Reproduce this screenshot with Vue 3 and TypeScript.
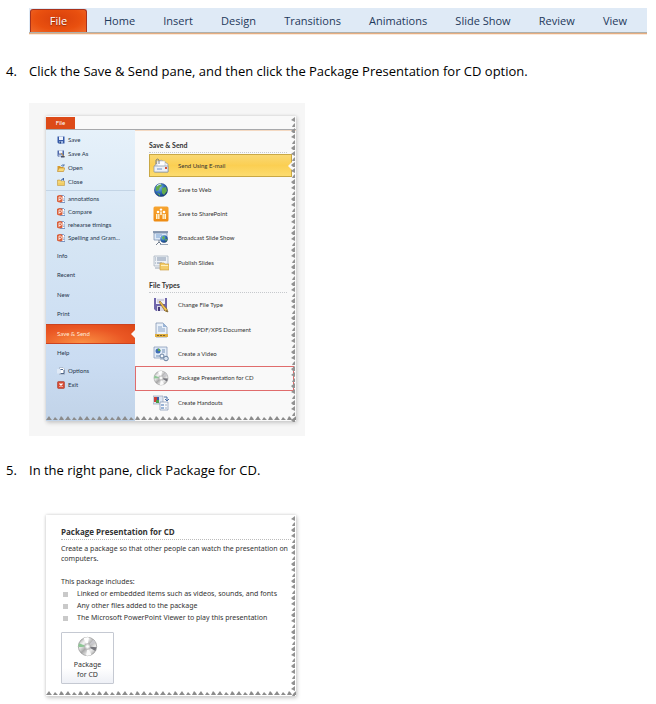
<script setup lang="ts">
interface Entry {
  label: string
  icon?: string
}

const tabs: string[] = ['Home', 'Insert', 'Design', 'Transitions', 'Animations', 'Slide Show', 'Review', 'View']

const fileCommands: Entry[] = [
  { label: 'Save', icon: 'save' },
  { label: 'Save As', icon: 'save-as' },
  { label: 'Open', icon: 'open' },
  { label: 'Close', icon: 'close' },
]

const recentFiles: string[] = ['annotations', 'Compare', 'rehearse timings', 'Spelling and Gram...']

const pages: string[] = ['Info', 'Recent', 'New', 'Print', 'Save & Send', 'Help']

const exitCommands: Entry[] = [
  { label: 'Options', icon: 'options' },
  { label: 'Exit', icon: 'exit' },
]

const sendOptions: Entry[] = [
  { label: 'Send Using E-mail', icon: 'mail' },
  { label: 'Save to Web', icon: 'globe' },
  { label: 'Save to SharePoint', icon: 'sharepoint' },
  { label: 'Broadcast Slide Show', icon: 'broadcast' },
  { label: 'Publish Slides', icon: 'publish' },
]

const fileTypes: Entry[] = [
  { label: 'Change File Type', icon: 'change' },
  { label: 'Create PDF/XPS Document', icon: 'pdf' },
  { label: 'Create a Video', icon: 'video' },
  { label: 'Package Presentation for CD', icon: 'disc' },
  { label: 'Create Handouts', icon: 'handouts' },
]

const contents: string[] = [
  'Linked or embedded items such as videos, sounds, and fonts',
  'Any other files added to the package',
  'The Microsoft PowerPoint Viewer to play this presentation',
]
</script>

<template>
  <svg class="sprite" aria-hidden="true">
    <defs>
      <radialGradient id="globe-fill" cx="0.35" cy="0.3" r="0.8">
        <stop offset="0" stop-color="#8cc4ee" />
        <stop offset="0.5" stop-color="#2f6cb8" />
        <stop offset="1" stop-color="#0f2f68" />
      </radialGradient>
      <linearGradient id="disc-fill" x1="0" y1="0" x2="1" y2="1">
        <stop offset="0" stop-color="#8e8e8e" />
        <stop offset="0.3" stop-color="#f4f4f4" />
        <stop offset="0.5" stop-color="#a9a9a9" />
        <stop offset="0.7" stop-color="#ededed" />
        <stop offset="1" stop-color="#858585" />
      </linearGradient>
      <linearGradient id="orange-fill" x1="0" y1="0" x2="0" y2="1">
        <stop offset="0" stop-color="#f7a531" />
        <stop offset="1" stop-color="#ee8b12" />
      </linearGradient>
      <pattern id="teeth-side" width="6" height="17" patternUnits="userSpaceOnUse">
        <path d="M5 0 L1 3 L3 4 L5 5 Z M5 6 L3 8 L2 10 L5 10 Z M5 11 L1 14 L3 16 L5 16 Z" fill="#929292" />
      </pattern>
      <pattern id="teeth-bottom" width="19" height="6" patternUnits="userSpaceOnUse">
        <path d="M0 5 L3 1 L5 4 L6 5 Z M7 5 L9 2 L12 5 Z M13 5 L15 1 L17 3 L18 5 Z" fill="#8b8b8b" />
      </pattern>
    </defs>
    <symbol id="save" viewBox="0 0 16 16">
      <path d="M1 1h14v14H3l-2-2z" fill="#3459a8" />
      <path d="M4 1h8v7H4z" fill="#eef3fb" />
      <path d="M4 10h8v5H4z" fill="#9fb6df" />
      <path d="M5 11h3v4H5z" fill="#27457f" />
    </symbol>
    <symbol id="save-as" viewBox="0 0 16 16">
      <path d="M1 1h13v13H3l-2-2z" fill="#4d67a8" />
      <path d="M4 1h7v6H4z" fill="#eef3fb" />
      <path d="M3 9h8v5H3z" fill="#b8c4dc" />
      <path d="M8 6l7 8" stroke="#d49b3c" stroke-width="2" />
      <path d="M8 12h7v3H8z" fill="#48506a" />
    </symbol>
    <symbol id="open" viewBox="0 0 16 16">
      <path d="M1 4h5l2 2h5v9H1z" fill="#d69b2f" />
      <path d="M4 8h12l-3 7H1z" fill="#f8d978" stroke="#b98226" />
      <path d="M8 4q3-4 6-1M14 0v4h-4" fill="none" stroke="#4c6da5" stroke-width="1.5" />
    </symbol>
    <symbol id="close" viewBox="0 0 16 16">
      <path d="M1 4h5l2 2h7v9H1z" fill="#f1cd64" stroke="#b98a2c" />
      <path d="M9 5q0-4 4-3M13 0v5" fill="none" stroke="#3b62a4" stroke-width="2" />
      <path d="M2 8h12" stroke="#fff0b0" />
    </symbol>
    <symbol id="ppt" viewBox="0 0 16 16">
      <path d="M7 1h6l3 3v11H7z" fill="#fff" stroke="#5478b4" stroke-width="1.5" />
      <path d="M0 2q6-4 11 0v11q-5 4-11 0z" fill="#d9603c" />
      <path d="M4 12V4h2.500q2.500 0 2.500 2.500T6.500 9H4" fill="none" stroke="#fff" stroke-width="1.500" />
      <path d="M12 8h3M12 11h3" stroke="#3f68ac" />
    </symbol>
    <symbol id="options" viewBox="0 0 16 16">
      <path d="M5 1h7l3 3v11H5z" fill="#fff" stroke="#8294ae" />
      <path d="M0 4h8v9H0z" fill="#dfe9f6" />
      <path d="M7 5h5M7 13h7V6" fill="none" stroke="#4e6588" stroke-width="2" />
    </symbol>
    <symbol id="exit" viewBox="0 0 16 16">
      <rect x="1" y="1" width="14" height="14" rx="2" fill="#d64a32" stroke="#a13222" />
      <path d="M5 5l6 6M11 5l-6 6" stroke="#fff" stroke-width="2.500" />
    </symbol>
    <symbol id="mail" viewBox="0 0 16 16">
      <path d="M2 7l6-5 7 4v8H2z" fill="#f5f6f8" stroke="#8d97a6" stroke-width="0.700" />
      <path d="M4 3h8v6H4z" fill="#fff" stroke="#a9b3c0" stroke-width="0.500" />
      <path d="M1 8h14v6H1z" fill="#edf1f7" stroke="#8492a8" stroke-width="0.700" />
      <path d="M4 11h5" stroke="#6c91c9" />
      <path d="M12 9h2v2h-2z" fill="#d0533b" />
      <path d="M3 6V2q1.500-2 3 0v4" fill="none" stroke="#6d7783" stroke-width="0.900" />
    </symbol>
    <symbol id="globe" viewBox="0 0 16 16">
      <circle cx="8" cy="8" r="6.600" fill="url(#globe-fill)" stroke="#1c3c74" stroke-width="0.500" />
      <path d="M3 5q2-3 5-3l1 2-2 1-1 3-3 1zM9 6l4-1 1 4-3 4-2-2zM4 11l3 1v2z" fill="#63ab4b" />
      <path d="M4 4q2-2 4-2" fill="none" stroke="#d7eefa" />
    </symbol>
    <symbol id="sharepoint" viewBox="0 0 16 16">
      <rect x="0.500" y="0.500" width="15" height="15" rx="1.500" fill="url(#orange-fill)" />
      <circle cx="5" cy="6" r="1.300" fill="#fff" />
      <circle cx="11" cy="6" r="1.300" fill="#fff" />
      <circle cx="8" cy="3.600" r="1.200" fill="#fff" />
      <path d="M3 13V8h3.500v5zM9.500 13V8H13v5zM7.200 5.500h1.600V9H7.200z" fill="#fff3d4" />
      <path d="M4.700 8v5M11.200 8v5" stroke="#ee9a26" stroke-width="0.600" />
    </symbol>
    <symbol id="broadcast" viewBox="0 0 16 16">
      <path d="M0 1h15v2H0z" fill="#8a9bb2" />
      <path d="M1 3h13v7H1z" fill="#dce9f7" stroke="#7187a6" stroke-width="0.700" />
      <path d="M3 5h6M3 7h4" stroke="#7ba2d2" />
      <path d="M6 10v3M3 15l3-3 3 3" fill="none" stroke="#727e8f" />
      <circle cx="11" cy="9" r="3.700" fill="url(#globe-fill)" />
      <path d="M9 7l2-1 1 2-2 2zM12 9h2l-1 3z" fill="#65b04c" />
      <path d="M7 14.500h8" stroke="#9aa7b6" />
    </symbol>
    <symbol id="publish" viewBox="0 0 16 16">
      <path d="M1 1h14v10H1z" fill="#edf1f6" stroke="#a1acba" stroke-width="0.700" />
      <path d="M4 3h9M4 5h9M4 8h5" stroke="#8394ad" />
      <path d="M2 3h1M2 5h1M2 8h1M2 13h6" stroke="#99a6b6" />
      <path d="M7 8h4l1 1h4v6H7z" fill="#f3cc69" stroke="#c99837" stroke-width="0.600" />
      <path d="M8 10.500h7" stroke="#fff0bd" />
    </symbol>
    <symbol id="change" viewBox="0 0 16 16">
      <path d="M1 1h13v13H3l-2-2z" fill="#6f66ab" />
      <path d="M3 1h9v6H3z" fill="#f2f1f8" />
      <path d="M4 9h7v5H4z" fill="#d8d7e6" />
      <path d="M5 10h2v4H5z" fill="#453a77" />
      <path d="M6 5l1-1 7 8 1 3-3-1z" fill="#f2c34d" stroke="#79561f" stroke-width="0.600" />
      <path d="M13 13l2 2-2-1z" fill="#333" />
      <path d="M4 3h7M4 5h2" stroke="#9c98b8" stroke-width="0.700" />
    </symbol>
    <symbol id="pdf" viewBox="0 0 16 16">
      <path d="M3 1h7l4 4v10H3z" fill="#eaf1fa" stroke="#768ba9" stroke-width="0.700" />
      <path d="M10 1v4h4z" fill="#9ab5d8" />
      <path d="M5 5h4M5 7h7M5 9h7" stroke="#8aa4c7" />
      <path d="M2 12h13v3H2z" fill="#dfae3f" />
      <path d="M4 13.500h9" stroke="#7f642b" stroke-dasharray="2 1" />
    </symbol>
    <symbol id="video" viewBox="0 0 16 16">
      <path d="M1 1h13v11H1z" fill="#e4edf8" stroke="#7b91b3" stroke-width="0.700" />
      <circle cx="5" cy="5" r="2.500" fill="#416fb4" />
      <path d="M5 5V2.500A2.500 2.500 0 0 1 7.500 5z" fill="#67ae49" />
      <path d="M9 4h3M9 6h3M3 10h4" stroke="#718eb6" />
      <circle cx="9" cy="10" r="2" fill="#f5f8fc" stroke="#667f9f" />
      <circle cx="13" cy="12.500" r="2.300" fill="#d8e3ef" stroke="#667f9f" />
      <path d="M7 13h4" stroke="#8ba0ba" />
    </symbol>
    <symbol id="disc" viewBox="0 0 16 16">
      <circle cx="8" cy="8" r="7" fill="url(#disc-fill)" stroke="#8b8b8b" stroke-width="0.500" />
      <path d="M8 8L5 1.700A7 7 0 0 1 9 1z" fill="#fff" />
      <path d="M8 8L11 14.300A7 7 0 0 1 7 15z" fill="#fafafa" />
      <path d="M8 8L1.500 5.500 1 8.500z" fill="#8ec795" />
      <path d="M8 8L14.800 8.500 14 11.500z" fill="#75757c" />
      <path d="M8 8L12.500 2.700 14.200 5z" fill="#c9c9ce" />
      <circle cx="8" cy="8" r="2.200" fill="#ddd" stroke="#a7a7a7" stroke-width="0.500" />
      <circle cx="8" cy="8" r="1" fill="#fff" />
    </symbol>
    <symbol id="handouts" viewBox="0 0 16 16">
      <path d="M0 1h10v8H0z" fill="#dde6f3" stroke="#8796ad" stroke-width="0.600" />
      <path d="M1 2h4v5H1z" fill="#ca3f38" />
      <path d="M3 5h3v3H3z" fill="#4c9d4a" />
      <path d="M4 2h2v3H4z" fill="#395ca3" />
      <path d="M11 2h3v3M12 4l2 2 2-2" fill="none" stroke="#476ea8" />
      <path d="M7 7h8v8H7z" fill="#f7f9fc" stroke="#7e94b2" stroke-width="0.700" />
      <path d="M8 9h3v2H8zM8 12h3v2H8z" fill="#9bb4d6" />
      <path d="M12 10h2M12 13h2" stroke="#9eacbf" />
    </symbol>
  </svg>

  <main class="article">
    <nav class="ribbon" aria-label="Ribbon">
      <button type="button" class="file-tab">File</button>
      <div class="tabs">
        <button v-for="tab in tabs" :key="tab" type="button">{{ tab }}</button>
      </div>
    </nav>

    <ol class="steps" start="4">
      <li>
        <p class="step"><span class="number">4.</span><span>Click the Save &amp; Send pane, and then click the Package Presentation for CD option.</span></p>
        <figure class="shot grey">
          <div class="paper backstage">
            <header class="mini-ribbon">
              <button type="button">File</button>
            </header>
            <div class="columns">
              <nav class="sidebar" aria-label="File menu">
                <div class="commands">
                  <button v-for="item in fileCommands" :key="item.label" type="button">
                    <svg><use :href="'#' + item.icon" /></svg>{{ item.label }}
                  </button>
                </div>
                <div class="recent">
                  <button v-for="name in recentFiles" :key="name" type="button">
                    <svg><use href="#ppt" /></svg>{{ name }}
                  </button>
                </div>
                <div class="pages">
                  <button v-for="page in pages" :key="page" type="button" :class="{ current: page === 'Save & Send' }">{{ page }}</button>
                </div>
                <div class="commands">
                  <button v-for="item in exitCommands" :key="item.label" type="button">
                    <svg><use :href="'#' + item.icon" /></svg>{{ item.label }}
                  </button>
                </div>
              </nav>
              <section class="options">
                <h2>Save &amp; Send</h2>
                <div class="choices">
                  <button v-for="(item, i) in sendOptions" :key="item.label" type="button" :class="{ selected: i === 0 }">
                    <svg><use :href="'#' + item.icon" /></svg>{{ item.label }}
                  </button>
                </div>
                <h2>File Types</h2>
                <div class="choices">
                  <button v-for="item in fileTypes" :key="item.label" type="button" :class="{ marked: item.icon === 'disc' }">
                    <svg><use :href="'#' + item.icon" /></svg>{{ item.label }}
                  </button>
                </div>
              </section>
            </div>
            <svg class="tear side" aria-hidden="true"><rect width="100%" height="100%" fill="url(#teeth-side)" /></svg>
            <svg class="tear bottom" aria-hidden="true"><rect width="100%" height="100%" fill="url(#teeth-bottom)" /></svg>
          </div>
        </figure>
      </li>
      <li>
        <p class="step"><span class="number">5.</span><span>In the right pane, click Package for CD.</span></p>
        <figure class="shot">
          <div class="paper package">
            <h2>Package Presentation for CD</h2>
            <p class="lead">Create a package so that other people can watch the presentation on<br>computers.</p>
            <p>This package includes:</p>
            <ul>
              <li v-for="line in contents" :key="line">{{ line }}</li>
            </ul>
            <button type="button" class="package-button">
              <svg><use href="#disc" /></svg>
              <span>Package<br>for CD</span>
            </button>
            <svg class="tear side" aria-hidden="true"><rect width="100%" height="100%" fill="url(#teeth-side)" /></svg>
            <svg class="tear bottom" aria-hidden="true"><rect width="100%" height="100%" fill="url(#teeth-bottom)" /></svg>
          </div>
        </figure>
      </li>
    </ol>
  </main>
</template>

<style>
body {
  margin: 0;
  background: #fff;
}
</style>

<style scoped>
.sprite {
  position: absolute;
  width: 0;
  height: 0;
}

.article {
  padding: 8px 9px 0 6px;
  font-family: "Open Sans", "Noto Sans", sans-serif;
  font-size: 13px;
  line-height: 16px;
  color: #000;
}

button {
  margin: 0;
  padding: 0;
  border: 0;
  background: none;
  font: inherit;
  color: inherit;
  text-align: left;
  white-space: nowrap;
}

h2,
p,
ol,
ul,
figure {
  margin: 0;
  padding: 0;
}

ol,
ul {
  list-style: none;
}

.ribbon {
  display: flex;
  height: 24px;
  margin: 0 0 4px 23px;
  padding-left: 1px;
  background: #dfeaf6;
  border-bottom: 1px solid #aeb0ac;
  box-shadow: 0 1px #e5ad80, 0 2px #fbe9da;
  font-size: 11px;
  color: #1e395b;
}

.file-tab {
  width: 57px;
  margin-top: 1px;
  border: 1px solid #a8321c;
  border-bottom: 0;
  border-radius: 3px 3px 0 0;
  background: radial-gradient(ellipse at 50% 40%, #d8400c, #e9500f 60%, #f06a2a);
  color: #fff;
  text-align: center;
  text-shadow: 0 1px 1px #8a2a08;
}

.tabs {
  display: flex;
  flex: 1;
  justify-content: space-between;
  padding: 2px 20px 0 17px;
}

.step {
  display: flex;
  padding-top: 26px;
}

.number {
  width: 23px;
}

.shot {
  box-sizing: border-box;
  width: 100%;
  max-width: 276px;
  margin: 24px 0 0 23px;
  padding: 13px 9px 15px 17px;
}

.grey {
  background: #f6f6f6;
}

.paper {
  position: relative;
  font-family: Lato, "Open Sans", sans-serif;
  color: #333;
  box-shadow: 0 0 3px #ccc, 1px 2px 4px #ccc;
}

.backstage {
  background: #f9f9f9;
  font-size: 6px;
  line-height: 8px;
}

.mini-ribbon {
  display: flex;
  height: 13px;
  border-bottom: 1px solid #a8a9ac;
  box-shadow: 0 1px #f4d9c2;
}

.mini-ribbon button {
  width: 29px;
  margin-top: 1px;
  background: #dd4a18;
  color: #fff;
  text-align: center;
}

.columns {
  display: grid;
  grid-template-columns: 89px 1fr;
  height: 291px;
}

.sidebar {
  padding-top: 3px;
  background: linear-gradient(#e6f1fa, #d5e5f4 40%, #cadcf2 80%, #c1d3e8);
  color: #26364c;
}

.sidebar button {
  display: flex;
  align-items: center;
  width: 100%;
  padding-left: 11px;
}

.sidebar svg {
  width: 8px;
  height: 8px;
  margin-right: 3px;
}

.commands {
  display: grid;
  grid-auto-rows: 14px;
}

.recent {
  display: grid;
  grid-template-rows: repeat(4, 1fr);
  height: 53px;
  margin-top: 1px;
  padding: 1px 0;
  border-top: 1px solid #c3d4e5;
}

.pages {
  display: grid;
  grid-template-rows: repeat(6, 1fr);
  height: 117px;
  padding-bottom: 1px;
}

.sidebar .current {
  position: relative;
  background: radial-gradient(ellipse at 40% 100%, #fb9143, #ea5724 60%, #dc4717);
  border: solid #cc4320;
  border-width: 1px 0;
  color: #ffe9d8;
}

.current::after {
  content: "";
  position: absolute;
  right: 0;
  border: 4px solid transparent;
  border-left-width: 0;
  border-right-color: #f9f9f9;
}

.options {
  padding: 11px 4px 0 14px;
}

.options h2 {
  margin-right: 5px;
  padding-bottom: 2px;
  border-bottom: 1px dotted #c6c9cd;
  font-size: 7px;
  line-height: 9px;
  color: #333;
}

.choices {
  display: grid;
  grid-template-rows: repeat(5, 1fr);
  height: 122px;
  margin-bottom: 6px;
}

.choices button {
  display: flex;
  align-items: center;
  padding-left: 4px;
}

.choices svg {
  width: 16px;
  height: 16px;
  margin-right: 9px;
}

.choices .selected {
  position: relative;
  margin-top: 1px;
  padding-left: 3px;
  border: 1px solid #c9a845;
  background: linear-gradient(#f9d874, #fbcf52 50%, #fcdc70);
}

.selected::after {
  content: "";
  position: absolute;
  right: -1px;
  border: 4px solid transparent;
  border-left-width: 0;
  border-right-color: #f9f9f9;
}

.choices .marked {
  margin: 0 -2px 0 -14px;
  padding-left: 17px;
  border: 1px solid #e06c6c;
}

.tear {
  position: absolute;
  overflow: hidden;
}

.side {
  top: 1px;
  right: 0;
  width: 6px;
  height: 100%;
}

.bottom {
  left: 0;
  bottom: 0;
  width: 100%;
  height: 6px;
}

.package {
  padding: 11px 5px 12px 15px;
  background: #fff;
  font-family: "Noto Sans", "Open Sans", sans-serif;
  font-size: 7px;
  line-height: 10px;
}

.package h2 {
  margin-bottom: 4px;
  padding-bottom: 2px;
  border-bottom: 1px dotted #bbb;
  font-family: "Open Sans", "Noto Sans", sans-serif;
  font-size: 8px;
  line-height: 11px;
}

.package .lead {
  margin-right: -5px;
  margin-bottom: 13px;
  overflow: hidden;
  white-space: nowrap;
}

.package ul {
  padding-top: 1px;
}

.package li {
  display: flex;
  align-items: center;
  height: 12px;
  white-space: nowrap;
}

.package li::before {
  content: "";
  width: 5px;
  height: 5px;
  margin: 0 9px 0 2px;
  background: #c9c9c9;
}

.package-button {
  display: flex;
  flex-direction: column;
  align-items: center;
  justify-content: center;
  gap: 3px;
  width: 53px;
  height: 52px;
  margin-top: 8px;
  border: 1px solid #c5c9d2;
  border-radius: 1px;
  background: linear-gradient(#fff 70%, #eef0f6);
  text-align: center;
}

.package-button svg {
  width: 21px;
  height: 21px;
}
</style>
